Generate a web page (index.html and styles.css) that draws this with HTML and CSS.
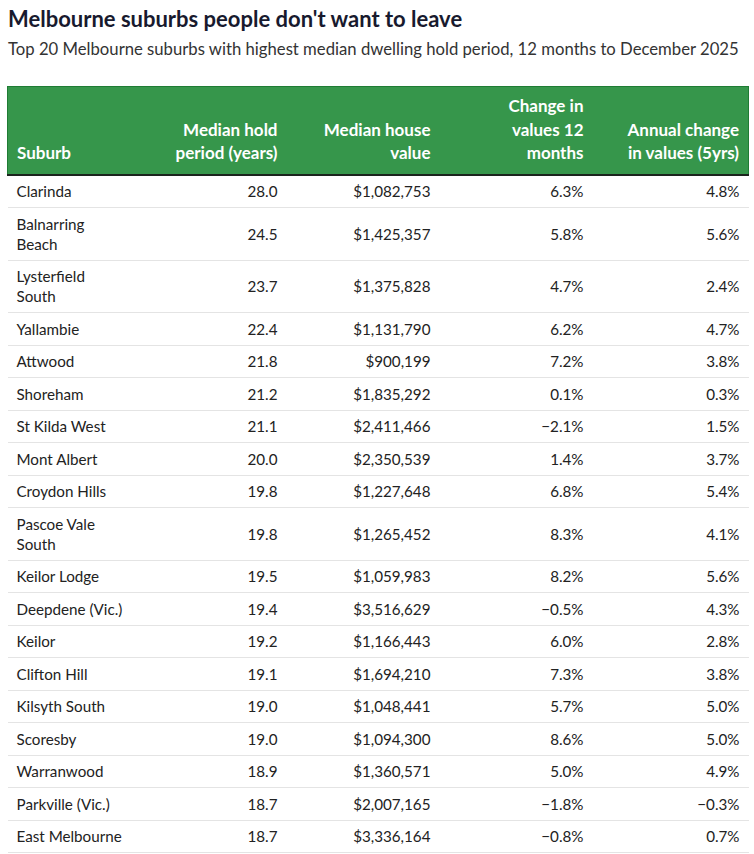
FILE: index.html
```html
<!DOCTYPE html>
<html lang="en">
<head>
<meta charset="utf-8">
<title>Melbourne suburbs people don't want to leave</title>
<link rel="stylesheet" href="styles.css">
</head>
<body>
<div class="chart">
  <h1 class="title">Melbourne suburbs people don't want to leave</h1>
  <p class="subtitle">Top 20 Melbourne suburbs with highest median dwelling hold period, 12 months to December 2025</p>
  <table class="data">
    <colgroup>
      <col class="c1"><col class="c2"><col class="c3"><col class="c4"><col class="c5">
    </colgroup>
    <thead>
      <tr>
        <th class="left">Suburb</th>
        <th>Median hold period (years)</th>
        <th>Median house value</th>
        <th>Change in values 12 months</th>
        <th>Annual change in values (5yrs)</th>
      </tr>
    </thead>
    <tbody>
      <tr><td class="left">Clarinda</td><td>28.0</td><td>$1,082,753</td><td>6.3%</td><td>4.8%</td></tr>
      <tr><td class="left">Balnarring Beach</td><td>24.5</td><td>$1,425,357</td><td>5.8%</td><td>5.6%</td></tr>
      <tr><td class="left">Lysterfield South</td><td>23.7</td><td>$1,375,828</td><td>4.7%</td><td>2.4%</td></tr>
      <tr><td class="left">Yallambie</td><td>22.4</td><td>$1,131,790</td><td>6.2%</td><td>4.7%</td></tr>
      <tr><td class="left">Attwood</td><td>21.8</td><td>$900,199</td><td>7.2%</td><td>3.8%</td></tr>
      <tr><td class="left">Shoreham</td><td>21.2</td><td>$1,835,292</td><td>0.1%</td><td>0.3%</td></tr>
      <tr><td class="left">St Kilda West</td><td>21.1</td><td>$2,411,466</td><td>&minus;2.1%</td><td>1.5%</td></tr>
      <tr><td class="left">Mont Albert</td><td>20.0</td><td>$2,350,539</td><td>1.4%</td><td>3.7%</td></tr>
      <tr><td class="left">Croydon Hills</td><td>19.8</td><td>$1,227,648</td><td>6.8%</td><td>5.4%</td></tr>
      <tr><td class="left">Pascoe Vale South</td><td>19.8</td><td>$1,265,452</td><td>8.3%</td><td>4.1%</td></tr>
      <tr><td class="left">Keilor Lodge</td><td>19.5</td><td>$1,059,983</td><td>8.2%</td><td>5.6%</td></tr>
      <tr><td class="left">Deepdene (Vic.)</td><td>19.4</td><td>$3,516,629</td><td>&minus;0.5%</td><td>4.3%</td></tr>
      <tr><td class="left">Keilor</td><td>19.2</td><td>$1,166,443</td><td>6.0%</td><td>2.8%</td></tr>
      <tr><td class="left">Clifton Hill</td><td>19.1</td><td>$1,694,210</td><td>7.3%</td><td>3.8%</td></tr>
      <tr><td class="left">Kilsyth South</td><td>19.0</td><td>$1,048,441</td><td>5.7%</td><td>5.0%</td></tr>
      <tr><td class="left">Scoresby</td><td>19.0</td><td>$1,094,300</td><td>8.6%</td><td>5.0%</td></tr>
      <tr><td class="left">Warranwood</td><td>18.9</td><td>$1,360,571</td><td>5.0%</td><td>4.9%</td></tr>
      <tr><td class="left">Parkville (Vic.)</td><td>18.7</td><td>$2,007,165</td><td>&minus;1.8%</td><td>&minus;0.3%</td></tr>
      <tr><td class="left">East Melbourne</td><td>18.7</td><td>$3,336,164</td><td>&minus;0.8%</td><td>0.7%</td></tr>
    </tbody>
  </table>
</div>
</body>
</html>
```
FILE: styles.css
```css
html, body {
  margin: 0;
  padding: 0;
  background: #ffffff;
}

body {
  font-family: "Lato", "Liberation Sans", sans-serif;
  color: #222222;
}

.chart {
  padding: 5px 0 0 0;
}

.title {
  margin: 0 0 0 8px;
  font-size: 22px;
  line-height: 27px;
  font-weight: 700;
  color: #181a2e;
}

.subtitle {
  margin: 6px 0 0 8px;
  font-size: 16.7px;
  line-height: 22px;
  color: #333333;
}

.data {
  margin: 26px 0 0 7px;
  width: 741px;
  border-collapse: collapse;
  table-layout: fixed;
  font-size: 15.2px;
}

.c1 { width: 126px; }
.c2 { width: 153px; }
.c3 { width: 153px; }
.c4 { width: 153px; }
.c5 { width: 156px; }

.data thead th {
  background: #36964b;
  color: #ffffff;
  font-weight: 700;
  font-size: 17px;
  line-height: 23.5px;
  text-align: right;
  vertical-align: bottom;
  padding: 7px 9px 9px 24px;
  border-top: 1px solid #1f7c34;
  border-bottom: 2px solid #1b241d;
}

.data thead th.left {
  padding-left: 9px;
  border-left: 1px solid #1f7c34;
}

.data thead th:last-child {
  border-right: 1px solid #1f7c34;
}

.data td {
  text-align: right;
  vertical-align: middle;
  padding: 5.75px 9px;
  line-height: 20px;
  border-bottom: 1px solid #e4e4e4;
  color: #222222;
}

.data .left {
  text-align: left;
}
```
